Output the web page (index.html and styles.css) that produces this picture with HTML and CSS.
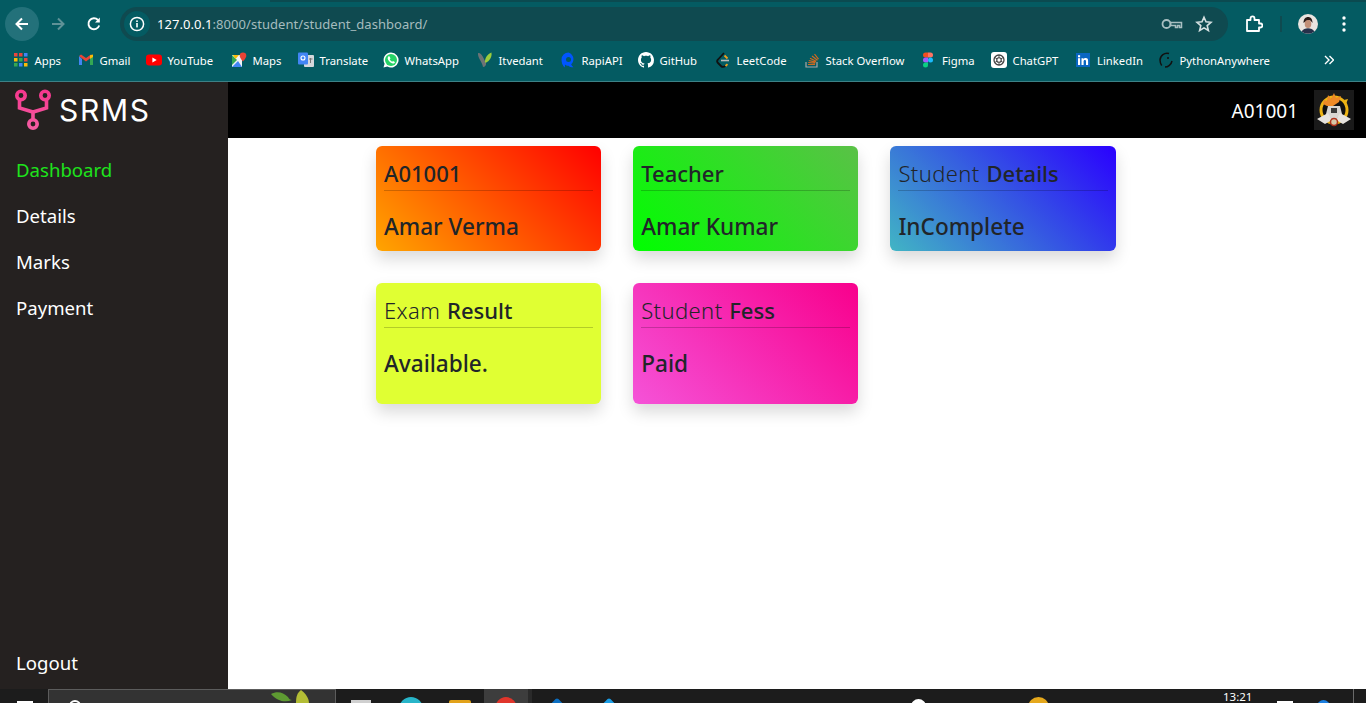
FILE: index.html
```html
<!DOCTYPE html>
<html>
<head>
	<meta charset="utf-8">
	<title>SRMS</title>
	<link rel="stylesheet" href="styles.css">
</head>
<body>
	<div class="tab_strip"><div class="tab_edge"></div></div>

	<div class="toolbar">
		<div class="nav_btn back_btn">
			<svg width="16" height="16" viewBox="0 0 16 16"><path d="M14 8H3M8 2.5L2.5 8 8 13.5" fill="none" stroke="#fff" stroke-width="2"/></svg>
		</div>
		<div class="nav_btn">
			<svg width="16" height="16" viewBox="0 0 16 16"><path d="M2 8h11M8 2.5L13.5 8 8 13.5" fill="none" stroke="#5f9297" stroke-width="2"/></svg>
		</div>
		<div class="nav_btn">
			<svg width="16" height="16" viewBox="0 0 16 16"><path d="M13.2 9.5A5.5 5.5 0 1 1 12 4" fill="none" stroke="#fff" stroke-width="1.9"/><path d="M13.8 1.6v4.8H9z" fill="#fff"/></svg>
		</div>
		<div class="omnibox">
			<div class="site_info">
				<svg width="16" height="16" viewBox="0 0 16 16"><circle cx="8" cy="8" r="6.6" fill="none" stroke="#fff" stroke-width="1.5"/><rect x="7.2" y="7" width="1.6" height="4.4" fill="#fff"/><rect x="7.2" y="4.4" width="1.6" height="1.6" fill="#fff"/></svg>
			</div>
			<div class="url"><span class="url_host">127.0.0.1</span>:8000/student/student_dashboard/</div>
			<svg class="omni_icon" width="22" height="12" viewBox="0 0 22 12"><circle cx="5.5" cy="6" r="4" fill="none" stroke="#a9bfc1" stroke-width="1.8"/><path d="M9.5 4.6h11v5h-2V7.4h-2v2.2h-2V7.4H9.500z" fill="none" stroke="#a9bfc1" stroke-width="1.5"/></svg>
			<svg class="omni_icon star" width="18" height="18" viewBox="0 0 18 18"><path d="M9 2.2l2 4.6 5 .5-3.8 3.3 1.2 4.9L9 12.9l-4.4 2.6 1.2-4.9L2 7.3l5-.5z" fill="none" stroke="#d5e0e1" stroke-width="1.6"/></svg>
		</div>
		<svg class="puzzle" width="18" height="18" viewBox="0 0 18 18"><path d="M2 5h3.5V3.4a2 2 0 0 1 4 0V5H14v3.5h1.4a2 2 0 0 1 0 4H14V16H2z" fill="none" stroke="#fff" stroke-width="1.8" stroke-linejoin="round"/></svg>
		<div class="tool_sep"></div>
		<svg class="avatar" width="20" height="20" viewBox="0 0 20 20">
			<circle cx="10" cy="10" r="10" fill="#e9e4e0"/>
			<path d="M5.5 9c0-4 2-6 4.600-6s4.400 2 4.400 6c-1-1.500-2-2.500-3-2.800-1.500.8-4.500 1.300-6 2.800z" fill="#2a1c1a"/>
			<ellipse cx="10" cy="10" rx="3.300" ry="4" fill="#c28f78"/>
			<path d="M3.600 17.500c1.500-2.600 3.800-3.300 6.400-3.300s4.900.7 6.400 3.300A10 10 0 0 1 3.600 17.500z" fill="#26304a"/>
		</svg>
		<svg class="menu_dots" width="4" height="16" viewBox="0 0 4 16"><circle cx="2" cy="2" r="1.700" fill="#fff"/><circle cx="2" cy="8" r="1.700" fill="#fff"/><circle cx="2" cy="14" r="1.700" fill="#fff"/></svg>
	</div>

	<div class="bookmarks">
		<div class="bm bm_apps">
			<svg width="16" height="16" viewBox="0 0 16 16">
				<g fill="#e8453c"><rect x="1" y="1" width="3.500" height="3.500"/><rect x="6" y="1" width="3.500" height="3.500"/></g>
				<rect x="11" y="1" width="3.500" height="3.500" fill="#4285f4"/>
				<rect x="1" y="6" width="3.500" height="3.500" fill="#fbbc05"/><rect x="6" y="6" width="3.500" height="3.500" fill="#34a853"/><rect x="11" y="6" width="3.500" height="3.500" fill="#e8453c"/>
				<rect x="1" y="11" width="3.500" height="3.500" fill="#34a853"/><rect x="6" y="11" width="3.500" height="3.500" fill="#4285f4"/><rect x="11" y="11" width="3.500" height="3.500" fill="#fbbc05"/>
			</svg>Apps
		</div>
		<div class="bm bm_gmail">
			<svg width="16" height="16" viewBox="0 0 16 16"><path d="M1 4v9h3V7z" fill="#4285f4"/><path d="M12 7v6h3V4z" fill="#34a853"/><path d="M1 4l7 5.500L15 4l-2-1.500L8 6 3 2.500z" fill="#ea4335"/><path d="M12 3.200L15 2.500V5l-3 2z" fill="#fbbc05"/></svg>Gmail
		</div>
		<div class="bm bm_youtube">
			<svg width="16" height="16" viewBox="0 0 16 16"><rect y="2.500" width="16" height="11" rx="3" fill="#f00"/><path d="M6.400 5.500v5L10.700 8z" fill="#fff"/></svg>YouTube
		</div>
		<div class="bm bm_maps">
			<svg width="16" height="16" viewBox="0 0 16 16"><path d="M1 3h10v12H1z" fill="#f1f3f4"/><path d="M1 15l6-6 4 6z" fill="#4285f4"/><path d="M1 3l5 5-5 5z" fill="#34a853"/><path d="M2 3h6L4.500 7z" fill="#fbbc05"/><path d="M12 .5a3.300 3.300 0 0 0-3.300 3.300C8.700 6 12 9.500 12 9.500s3.300-3.500 3.300-5.700A3.300 3.300 0 0 0 12 .5z" fill="#ea4335"/></svg>Maps
		</div>
		<div class="bm bm_translate">
			<svg width="16" height="16" viewBox="0 0 16 16"><rect x="6" y="3" width="10" height="12" rx="1" fill="#d5d8dc"/><rect y=".5" width="10" height="12" rx="1" fill="#4285f4"/><circle cx="5" cy="6" r="2" fill="none" stroke="#fff" stroke-width="1.100"/><path d="M11 7h3.500M12.500 6v5" stroke="#777" stroke-width="1"/></svg>Translate
		</div>
		<div class="bm bm_whatsapp">
			<svg width="16" height="16" viewBox="0 0 16 16"><path d="M8 .5a7.500 7.500 0 0 0-6.400 11.300L.5 15.500l3.800-1A7.500 7.500 0 1 0 8 .5z" fill="#fff"/><circle cx="8" cy="8" r="6" fill="#25d366"/><path d="M5.300 4.500c-1 1-.8 2.800.7 4.600 1.500 1.800 3.300 2.800 4.700 2.300.8-.3 1.300-1 1.200-1.500l-1.900-1-.8.9c-1-.4-2-1.400-2.500-2.500l.8-.8-.9-2c-.4-.2-1-.3-1.300 0z" fill="#fff"/></svg>WhatsApp
		</div>
		<div class="bm bm_itvedant">
			<svg width="16" height="16" viewBox="0 0 16 16"><path d="M1 1c3 0 4 2 5.500 5L9 11c.5 2-1 4-3 4-.5-3-2-5-3.500-8C1.500 5 .8 3 1 1z" fill="#6d7375"/><path d="M14.500 .5c.5 3-.5 6-3 8.500-1 1-2.500 2-3.500 1.500C7.500 7 10 2 14.500 .5z" fill="#9ccc3c"/></svg>Itvedant
		</div>
		<div class="bm bm_rapid">
			<svg width="16" height="16" viewBox="0 0 16 16"><path d="M8.500 .5a7 7 0 0 0-7 7c0 3 1 6 3 8 .5-1 .6-2 .4-3 1 .8 2 1.300 3.600 1.300 1 1 2.500 1.500 5 1.500-1-.8-2-1.800-2.300-3A7 7 0 0 0 8.500 .5z" fill="#0055ff"/><circle cx="8.500" cy="7.500" r="2.500" fill="#045b62"/></svg>RapiAPI
		</div>
		<div class="bm bm_github">
			<svg width="16" height="16" viewBox="0 0 16 16"><path fill="#fff" d="M8 0C3.580 0 0 3.580 0 8c0 3.540 2.290 6.530 5.470 7.590.4.070.55-.17.55-.38 0-.19-.01-.82-.01-1.490-2.010.37-2.530-.49-2.690-.94-.09-.23-.48-.94-.82-1.130-.28-.15-.68-.52-.01-.53.630-.01 1.080.58 1.230.82.720 1.210 1.870.87 2.330.66.070-.52.280-.87.510-1.070-1.780-.2-3.640-.89-3.640-3.950 0-.87.310-1.590.82-2.150-.08-.2-.36-1.020.08-2.120 0 0 .67-.21 2.200.82.640-.18 1.320-.27 2-.27s1.360.09 2 .27c1.530-1.040 2.200-.82 2.200-.82.440 1.100.160 1.920.08 2.120.51.560.82 1.270.82 2.150 0 3.070-1.870 3.750-3.650 3.950.29.250.54.730.54 1.480 0 1.070-.01 1.930-.01 2.200 0 .21.150.46.550.38A8.010 8.010 0 0 0 16 8c0-4.420-3.580-8-8-8z"/></svg>GitHub
		</div>
		<div class="bm bm_leet">
			<svg width="16" height="16" viewBox="0 0 16 16"><path d="M9 1L3 7.500c-1 1-1 2.500 0 3.500l3 3c1 1 3 1 4.500 0" fill="none" stroke="#111" stroke-width="1.800"/><path d="M10.500 14l2-1.800" stroke="#f0a01c" stroke-width="1.800"/><path d="M9.500 3.500l3 3" stroke="#f0a01c" stroke-width="1.800"/><path d="M6 8.500h8" stroke="#bbb" stroke-width="1.600"/></svg>LeetCode
		</div>
		<div class="bm bm_stack">
			<svg width="16" height="16" viewBox="0 0 16 16"><path d="M2 10v5h11v-5" fill="none" stroke="#a8a8a8" stroke-width="1.200"/><path d="M4 12.500h7M4.200 10.500l7 .6M4.800 8.500l6.800 1.700M6 6.200l6.200 3M8 4l5.500 4.300M10.500 2l4 5.200" stroke="#d2691e" stroke-width="1.200"/></svg>Stack Overflow
		</div>
		<div class="bm bm_figma">
			<svg width="16" height="16" viewBox="2 0 16 16"><path d="M5.500 .5H8v5H5.500a2.500 2.500 0 0 1 0-5z" fill="#f24e1e"/><path d="M8 .5h2.500a2.500 2.500 0 0 1 0 5H8z" fill="#ff7262"/><path d="M5.500 5.500H8v5H5.500a2.500 2.500 0 0 1 0-5z" fill="#a259ff"/><circle cx="10.500" cy="8" r="2.500" fill="#1abcfe"/><path d="M5.500 10.500H8V13a2.500 2.500 0 1 1-2.500-2.500z" fill="#0acf83"/></svg>Figma
		</div>
		<div class="bm bm_chatgpt">
			<svg width="16" height="16" viewBox="0 0 16 16"><rect width="16" height="16" rx="3" fill="#fff"/><circle cx="8" cy="8" r="5" fill="none" stroke="#444" stroke-width="1.300"/><circle cx="8" cy="8" r="2.300" fill="none" stroke="#444" stroke-width="1.100"/><path d="M8 3v3M12.300 5.500l-2.500 1.400M12.300 10.500l-2.500-1.400M8 13v-3M3.700 10.500l2.500-1.400M3.700 5.500l2.500 1.400" stroke="#444" stroke-width=".9"/></svg>ChatGPT
		</div>
		<div class="bm bm_linkedin">
			<svg width="14" height="14" viewBox="0 0 14 14"><rect width="14" height="14" fill="#0a66c2"/><rect x="2" y="5.200" width="2.100" height="6.800" fill="#fff"/><rect x="2" y="2.200" width="2.100" height="2.100" fill="#fff"/><path d="M5.500 5.200h2v1c.4-.7 1.200-1.200 2.200-1.200 1.900 0 2.400 1.200 2.400 3v4H10V8.500c0-.9-.2-1.600-1.100-1.600-1 0-1.300.7-1.300 1.600V12H5.500z" fill="#fff"/></svg>LinkedIn
		</div>
		<div class="bm bm_python">
			<svg width="16" height="16" viewBox="0 0 16 16"><path d="M11 1.500A7 7 0 0 0 2 8c0 2 .7 4 1.700 5.500M7 15c3 0 6.300-2.500 7-6" fill="none" stroke="#111" stroke-width="1.500"/><circle cx="10" cy="6" r="1" fill="#111"/></svg>PythonAnywhere
		</div>
		<svg class="bm_more" width="10" height="10" viewBox="0 0 10 10"><path d="M1 1l4 4-4 4M5.500 1l4 4-4 4" fill="none" stroke="#fff" stroke-width="1.400"/></svg>
	</div>

	<div class="page">
		<aside class="sidebar">
			<div class="brand">
				<svg width="36" height="42" viewBox="0 0 36 42">
					<defs>
						<linearGradient id="brand_grad" gradientUnits="userSpaceOnUse" x1="0" y1="0" x2="0" y2="42">
							<stop offset="0" stop-color="#f6358c"/>
							<stop offset="1" stop-color="#f45fa4"/>
						</linearGradient>
					</defs>
					<g fill="none" stroke="url(#brand_grad)" stroke-width="3.600">
						<circle cx="6" cy="6.500" r="4.200"/>
						<circle cx="30" cy="6.500" r="4.200"/>
						<circle cx="18" cy="35" r="4.200"/>
						<path d="M4.500 10.500v8.500L18 23l13.500-4v-8.500M18 23v8"/>
					</g>
				</svg>
				<span class="brand_name">SRMS</span>
			</div>
			<nav class="side_nav">
				<a class="side_link active" href="#">Dashboard</a>
				<a class="side_link" href="#">Details</a>
				<a class="side_link" href="#">Marks</a>
				<a class="side_link" href="#">Payment</a>
			</nav>
			<a class="side_link logout" href="#">Logout</a>
		</aside>

		<div class="content">
			<header class="top_bar">
				<span class="user_id">A01001</span>
				<svg class="user_logo" width="40" height="40" viewBox="0 0 40 40">
					<rect width="40" height="40" fill="#1a1a1a"/>
					<circle cx="20" cy="20" r="13" fill="#111" stroke="#eeb414" stroke-width="3"/>
					<path d="M9 14l1-4 3 1 1-6 3 4 3-6 2 5 5-2-2 6-6 4-6 0z" fill="#ef8a26"/>
					<path d="M28 6l2 4 4-1-2 5z" fill="#eeb414"/>
					<path d="M14 16h12l2 8-8 7-8-7z" fill="#d9d6d2"/>
					<path d="M17 18h6v5h-6z" fill="#3a3a3a"/>
					<path d="M3 29l11-6 4 7-7 4zM37 29l-11-6-4 7 7 4z" fill="#e7e3de"/>
					<circle cx="20" cy="32" r="3.500" fill="#d6c9a8" stroke="#b2321c" stroke-width="1.500"/>
				</svg>
			</header>

			<main class="cards">
				<div class="card card_orange">
					<h4 class="card_title">A01001</h4>
					<div class="card_value">Amar Verma</div>
				</div>
				<div class="card card_green">
					<h4 class="card_title">Teacher</h4>
					<div class="card_value">Amar Kumar</div>
				</div>
				<div class="card card_blue">
					<h4 class="card_title"><span class="light">Student</span> Details</h4>
					<div class="card_value">InComplete</div>
				</div>
				<div class="card card_yellow">
					<h4 class="card_title"><span class="light">Exam</span> Result</h4>
					<p class="card_value">Available.</p>
				</div>
				<div class="card card_pink">
					<h4 class="card_title"><span class="light">Student</span> Fess</h4>
					<p class="card_value">Paid</p>
				</div>
			</main>
		</div>
	</div>

	<footer class="taskbar">
		<div class="task_start"><div class="win_logo"></div></div>
		<div class="task_search">
			<div class="search_ring"></div>
			<svg class="task_leaf" width="40" height="13" viewBox="0 0 40 13"><path d="M0 4c6-3 12-2 17 3 1 2 2 3 4 3-7 3-15 1-21-6z" fill="#5e9a32"/><path d="M25 13c0-6 1-10 5-13 4 3 8 8 8 13z" fill="#b3bd35"/></svg>
		</div>
		<div class="task_cell cell_bars"><div class="task_bars"></div></div>
		<div class="task_cell cell_edge"><div class="peek peek_edge"></div></div>
		<div class="task_cell cell_files"><div class="peek peek_files"></div></div>
		<div class="task_cell cell_chrome"><div class="peek peek_chrome"></div></div>
		<div class="task_cell cell_vs"><div class="peek peek_vs"></div></div>
		<div class="task_cell cell_code"><div class="peek peek_code"></div></div>
		<div class="tray">
			<div class="peek peek_wifi"></div>
			<div class="peek peek_norton"></div>
			<div class="clock">13:21</div>
			<div class="peek peek_white"></div>
			<div class="peek peek_blue"></div>
			<div class="desk_line"></div>
		</div>
	</footer>
</body>
</html>
```

FILE: styles.css
```css
* {
	box-sizing: border-box;
}

html, body {
	height: 100%;
}

body {
	margin: 0;
	height: 703px;
	overflow: hidden;
	display: flex;
	flex-direction: column;
	background-color: #ffffff;
	font-family: "Noto Sans", "Open Sans", sans-serif;
}

/* browser frame */
.tab_strip {
	height: 2px;
	background-color: #0b4a50;
}

.tab_edge {
	width: 270px;
	height: 2px;
	background-color: #045b62;
}

.toolbar {
	height: 39px;
	display: flex;
	align-items: center;
	background-color: #045b62;
	padding: 5px 0 0 5px;
}

.nav_btn {
	width: 34px;
	height: 34px;
	margin-right: 2px;
	border-radius: 50%;
	display: flex;
	align-items: center;
	justify-content: center;
}

.back_btn {
	background-color: #23717a;
}

.omnibox {
	width: 1108px;
	height: 34px;
	margin-left: 7px;
	padding: 0 8px 0 4px;
	display: flex;
	align-items: center;
	border-radius: 17px;
	background-color: #0f4a50;
}

.site_info {
	width: 26px;
	height: 26px;
	border-radius: 50%;
	display: flex;
	align-items: center;
	justify-content: center;
	background-color: #045b62;
}

.url {
	flex: 1;
	margin-left: 7px;
	font-size: 13px;
	letter-spacing: 0.05px;
	color: #a5bcbe;
}

.url_host {
	color: #ffffff;
}

.omni_icon {
	margin-right: 12px;
}

.star {
	margin-right: 7px;
}

.puzzle {
	margin-left: 17px;
}

.tool_sep {
	width: 2px;
	height: 16px;
	margin-left: 17px;
	background-color: #0f4a50;
}

.avatar {
	margin-left: 16px;
}

.menu_dots {
	margin-left: 24px;
}

.bookmarks {
	height: 41px;
	display: flex;
	align-items: center;
	padding: 0 0 2px 13px;
	background-color: #045b62;
	border-bottom: 1px solid #3d8186;
}

.bm {
	display: flex;
	align-items: center;
	gap: 5.5px;
	font-size: 11.3px;
	color: #ffffff;
	white-space: nowrap;
}

.bm_apps { width: 65px; }
.bm_gmail { width: 68px; }
.bm_youtube { width: 85px; }
.bm_maps { width: 67px; }
.bm_translate { width: 85px; }
.bm_whatsapp { width: 94px; }
.bm_itvedant { width: 83px; }
.bm_rapid { width: 78px; }
.bm_github { width: 77px; }
.bm_leet { width: 89px; }
.bm_stack { width: 118px; }
.bm_figma { width: 69px; gap: 4px; }
.bm_chatgpt { width: 85px; }
.bm_linkedin { width: 82px; gap: 7px; }
.bm_python { width: 166px; }

/* page */
.page {
	flex: 1;
	display: flex;
	min-height: 0;
}

.sidebar {
	width: 228px;
	display: flex;
	flex-direction: column;
	background-color: #252120;
	padding-bottom: 13px;
}

.brand {
	height: 56px;
	display: flex;
	align-items: center;
	padding-left: 15px;
	gap: 8px;
}

.brand_name {
	font-family: Inter, sans-serif;
	font-size: 30px;
	font-weight: 400;
	letter-spacing: 1.7px;
	color: #ffffff;
}

.side_nav {
	flex: 1;
	display: flex;
	flex-direction: column;
	padding-top: 8px;
}

.side_link {
	height: 46px;
	padding-left: 16px;
	display: flex;
	align-items: center;
	font-size: 18.6px;
	color: #ffffff;
	text-decoration: none;
}

.side_link.active {
	color: #1ee41c;
}

.logout {
	height: 28px;
}

.content {
	flex: 1;
	display: flex;
	flex-direction: column;
}

.top_bar {
	height: 56px;
	display: flex;
	align-items: center;
	justify-content: flex-end;
	gap: 16px;
	padding-right: 12px;
	background-color: #000000;
}

.user_id {
	padding-top: 1px;
	font-size: 19px;
	color: #ffffff;
}

.cards {
	display: grid;
	grid-template-columns: repeat(3, 225.2px);
	align-items: start;
	gap: 32px;
	padding: 8px 0 0 148px;
}

.card {
	padding: 8px;
	border-radius: 6px;
	color: #212529;
	box-shadow: 0 8px 16px rgba(0, 0, 0, 0.15);
}

.card_title {
	margin: 0 0 19px;
	height: 37px;
	line-height: 39px;
	font-size: 22px;
	font-weight: 500;
	border-bottom: 1px solid rgba(0, 0, 0, 0.2);
}

.card_title .light {
	font-weight: 300;
	letter-spacing: 0.4px;
	margin-right: 1px;
}

.card_value {
	margin: 0;
	height: 33px;
	line-height: 33px;
	font-size: 22.6px;
	font-weight: 500;
}

p.card_value {
	margin-bottom: 16px;
}

.card_orange { background-image: linear-gradient(45deg, #ffa500, #ff0000); }
.card_green { background-image: linear-gradient(45deg, #00ff00, #5ac147); }
.card_blue { background-image: linear-gradient(45deg, #41b5c4, #2a00ff); }
.card_yellow { background-color: #e0ff33; }
.card_pink { background-image: linear-gradient(45deg, #f553d8, #f8008c); }

/* windows taskbar, only its top shows */
.taskbar {
	height: 14px;
	display: flex;
	overflow: hidden;
	background-color: #1c1c1c;
}

.task_start {
	width: 48px;
	padding: 12px 0 0 17px;
}

.win_logo {
	width: 16px;
	height: 16px;
	background-color: #ffffff;
}

.task_search {
	width: 288px;
	height: 20px;
	display: flex;
	justify-content: space-between;
	padding: 0 24px 0 20px;
	background-color: #333333;
	border: 1px solid #5c5c5c;
}

.search_ring {
	width: 12px;
	height: 12px;
	margin-top: 10px;
	border: 2px solid #ffffff;
	border-radius: 50%;
}

.task_cell {
	height: 14px;
	display: flex;
	justify-content: center;
}

.cell_bars { width: 50px; }
.cell_edge { width: 49px; }
.cell_files { width: 49px; }
.cell_chrome { width: 48px; background-color: #3d3d3d; border-right: 4px solid #2a2a2a; }
.cell_vs { width: 50px; }
.cell_code { width: 54px; }

.task_bars {
	width: 20px;
	height: 3px;
	margin-top: 11px;
	background-color: #cfcfcf;
}

.peek {
	flex-shrink: 0;
	width: 24px;
	height: 24px;
	margin-top: 8px;
	border-radius: 50%;
}

.peek_edge { background-color: #28b5c9; }
.peek_files { width: 22px; margin-top: 11px; border-radius: 2px; background-color: #e2a21a; }
.peek_chrome { width: 22px; background-color: #e0352b; }
.peek_vs, .peek_code { width: 16px; height: 16px; margin-top: 12px; border-radius: 2px; transform: rotate(45deg); }
.peek_vs { background-color: #0c6fc2; }
.peek_code { background-color: #1b9ee6; }

.tray {
	flex: 1;
	display: flex;
}

.peek_wifi { width: 15px; height: 15px; margin: 10px 0 0 275px; background-color: #ffffff; }
.peek_norton { width: 21px; height: 21px; margin: 8px 0 0 102px; background-color: #e5a81c; }

.clock {
	width: 40px;
	height: 12px;
	margin: 2px 0 0 174px;
	font-size: 11.5px;
	line-height: 12px;
	color: #ffffff;
}

.peek_white { width: 16px; height: 16px; margin: 12px 0 0 14px; border-radius: 0; background-color: #ffffff; }
.peek_blue { width: 13px; height: 13px; margin: 11px 0 0 24px; background-color: #1b7fe0; }

.desk_line {
	width: 1px;
	height: 14px;
	margin-left: 23px;
	background-color: #6a6a6a;
}
```
